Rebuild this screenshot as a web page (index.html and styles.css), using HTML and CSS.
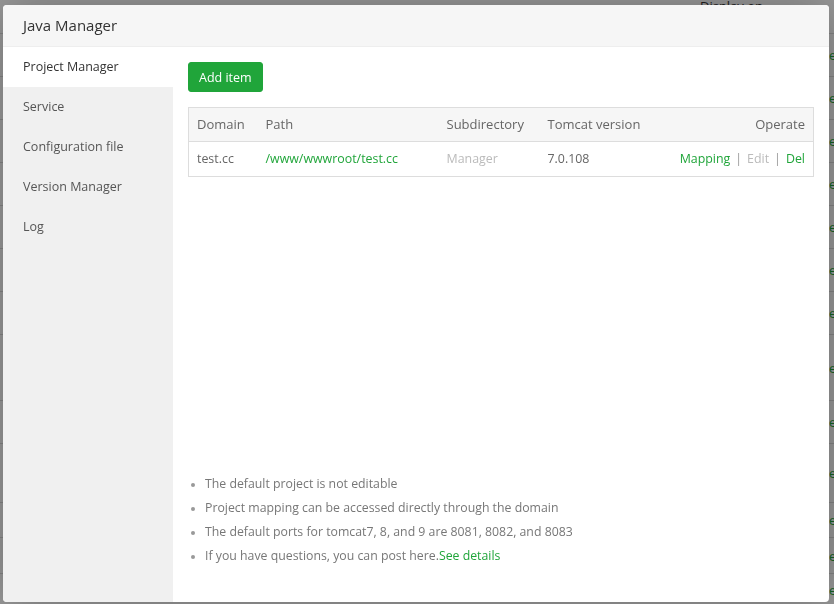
FILE: index.html
```html
<!DOCTYPE html>
<html>
<head>
<meta charset="utf-8">
<link rel="stylesheet" href="styles.css">
</head>
<body>
<div class="behind">
  <div class="bg-head">Display on</div>
  <div class="bg-row"><span class="bg-link">e</span></div>
  <div class="bg-row"><span class="bg-link">e</span></div>
  <div class="bg-row"><span class="bg-link">e</span></div>
  <div class="bg-row"><span class="bg-link">e</span></div>
  <div class="bg-row"><span class="bg-link">e</span></div>
  <div class="bg-row"><span class="bg-link">e</span></div>
  <div class="bg-row"><span class="bg-link">e</span></div>
  <div class="bg-row tall"><span class="bg-link">e</span></div>
  <div class="bg-row"><span class="bg-link">e</span></div>
  <div class="bg-row h59"><span class="bg-link">e</span></div>
  <div class="bg-row h35"><span class="bg-link">e</span></div>
  <div class="bg-row h36"><span class="bg-link">e</span></div>
  <div class="bg-row h31"><span class="bg-link">e</span></div>
</div>
<div class="shade"></div>
<div class="dialog">
  <div class="dialog-title">Java Manager</div>
  <div class="dialog-body">
    <ul class="side">
      <li class="side-item active">Project Manager</li>
      <li class="side-item">Service</li>
      <li class="side-item">Configuration file</li>
      <li class="side-item">Version Manager</li>
      <li class="side-item">Log</li>
    </ul>
    <div class="content">
      <div class="toolbar"><button class="btn">Add item</button></div>
      <table class="grid">
        <thead>
          <tr>
            <th class="c-domain">Domain</th>
            <th class="c-path">Path</th>
            <th class="c-sub">Subdirectory</th>
            <th class="c-ver">Tomcat version</th>
            <th class="c-op">Operate</th>
          </tr>
        </thead>
        <tbody>
          <tr>
            <td>test.cc</td>
            <td><a class="link">/www/wwwroot/test.cc</a></td>
            <td class="muted">Manager</td>
            <td>7.0.108</td>
            <td class="c-op"><a class="link">Mapping</a><span class="sep">|</span><span class="muted">Edit</span><span class="sep">|</span><a class="link">Del</a></td>
          </tr>
        </tbody>
      </table>
      <ul class="tips">
        <li>The default project is not editable</li>
        <li>Project mapping can be accessed directly through the domain</li>
        <li>The default ports for tomcat7, 8, and 9 are 8081, 8082, and 8083</li>
        <li>If you have questions, you can post here.<a class="link">See details</a></li>
      </ul>
    </div>
  </div>
</div>
</body>
</html>
```
FILE: styles.css
```css
* { box-sizing: border-box; }
html, body {
  margin: 0;
  width: 834px;
  height: 604px;
  overflow: hidden;
}
body {
  font-family: "Open Sans", "Noto Sans", sans-serif;
  background: #fff;
  color: #333;
}
.behind {
  width: 834px;
  height: 604px;
  overflow: hidden;
}
.bg-head {
  height: 34px;
  padding-left: 700px;
  font-size: 13px;
  line-height: 12px;
  color: #333;
  border-bottom: 1px solid #ddd;
}
.bg-row {
  height: 43px;
  border-bottom: 1px solid #ddd;
  padding-left: 829px;
  font-size: 13px;
  display: flex;
  align-items: center;
}
.bg-row.tall { height: 66px; }
.bg-row.h59 { height: 59px; }
.bg-row.h35 { height: 35px; }
.bg-row.h36 { height: 36px; }
.bg-row.h31 { height: 31px; border-bottom: 0; }
.bg-link { color: #20a53a; }
.shade {
  position: fixed;
  inset: 0;
  background: rgba(0, 0, 0, 0.4);
}
.dialog {
  position: fixed;
  left: 3px;
  top: 5px;
  width: 826px;
  height: 597px;
  background: #fff;
  border-radius: 4px;
  box-shadow: 1px 1px 50px rgba(0, 0, 0, 0.3);
  display: flex;
  flex-direction: column;
  overflow: hidden;
}
.dialog-title {
  height: 42px;
  flex: none;
  background: #f6f6f6;
  border-bottom: 1px solid #eee;
  padding-left: 20px;
  font-size: 15px;
  line-height: 41px;
  color: #333;
}
.dialog-body {
  flex: 1;
  display: flex;
  min-height: 0;
}
.side {
  width: 170px;
  flex: none;
  margin: 0;
  padding: 0;
  list-style: none;
  background: #f0f0f0;
}
.side-item {
  height: 40px;
  line-height: 39px;
  padding-left: 20px;
  font-size: 12.5px;
  color: #555;
}
.side-item.active { background: #fff; color: #333; }
.content {
  flex: 1;
  padding: 15px 15px 0 15px;
  display: flex;
  flex-direction: column;
}
.toolbar { display: flex; }
.btn {
  height: 30px;
  padding: 0 10px;
  border: 1px solid #20a53a;
  background: #20a53a;
  color: #fff;
  border-radius: 3px;
  font-family: inherit;
  font-size: 12.5px;
}
.grid {
  margin-top: 15px;
  width: 100%;
  border-collapse: collapse;
  border: 1px solid #ddd;
  font-size: 12.4px;
  color: #666;
}
.grid th {
  background: #f6f6f6;
  height: 34px;
  font-weight: normal;
  text-align: left;
  font-size: 13px;
  padding: 0 8px 2px 8px;
  border-bottom: 1px solid #ddd;
  color: #666;
}
.grid td {
  height: 35px;
  padding: 0 8px 2px 8px;
}
.grid .c-op { text-align: right; }
.c-domain { width: 69px; }
.c-path { width: 181px; }
.c-sub { width: 101px; }
.link { color: #20a53a; text-decoration: none; }
.muted { color: #bbb; }
.sep { color: #999; margin: 0 5px; }
.tips {
  margin: auto 0 34px 0;
  padding-left: 17px;
  font-size: 12.3px;
  color: #777;
  line-height: 24px;
}
.tips li::marker { color: #999; font-size: 10px; }
```
